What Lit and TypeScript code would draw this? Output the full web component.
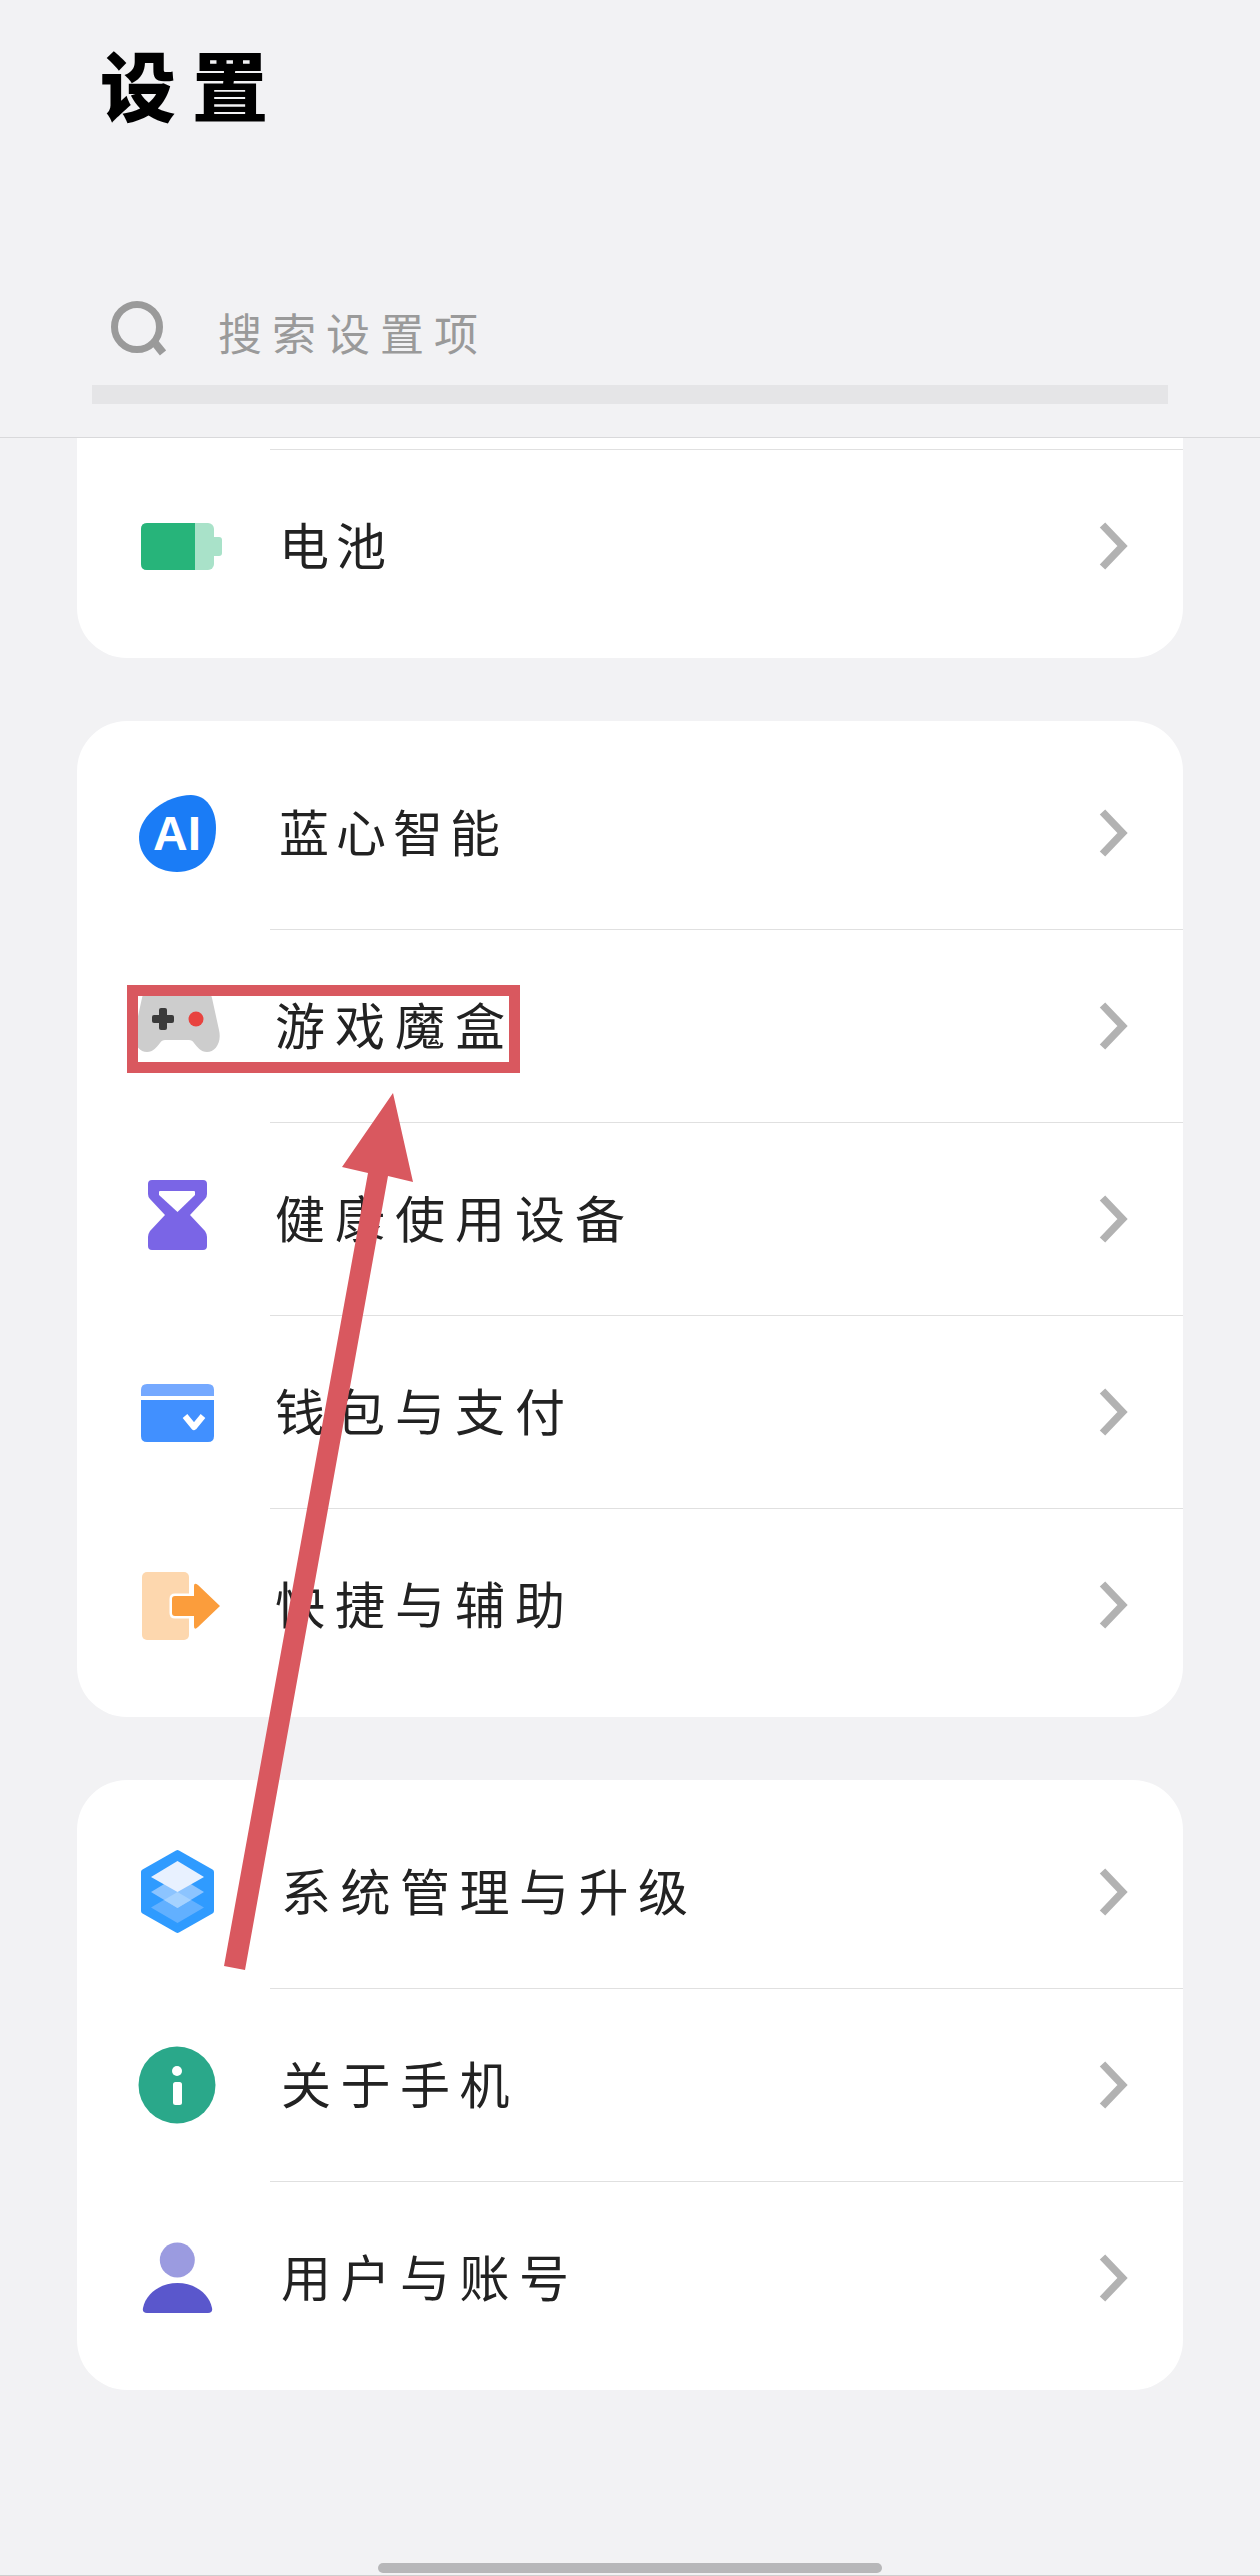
import { LitElement, html, svg, css } from 'lit';
import { customElement } from 'lit/decorators.js';

const icon = (body: unknown) => html`<svg class="icon" viewBox="0 0 90 90">${body}</svg>`;

const icons = {
  battery: svg`
    <rect x="8" y="22" width="73" height="47" rx="6" fill="#a9e2c9"/>
    <path d="M14 22H62V69H14Q8 69 8 63V28Q8 22 14 22Z" fill="#27b47a"/>
    <path d="M81 36H86Q89 36 89 39V52Q89 55 86 55H81Z" fill="#a9e2c9"/>`,
  ai: svg`
    <path d="M58 7C73 7 83 21 83 40C83 68 66 84 44 84C22 84 6 69 6 49C6 27 34 7 58 7Z" fill="#1a7cf6"/>
    <text class="ai" x="44" y="62" text-anchor="middle">AI</text>`,
  game: svg`
    <path d="M16 10H72C76 10 78 13 79 17L86 49C89 62 82 71 74 71C68 71 64 66 61 62C60 60 58 59 56 59H32C30 59 28 60 27 62C24 66 20 71 14 71C6 71 -1 62 2 49L9 17C10 13 12 10 16 10Z" fill="#cdcdcd"/>
    <rect x="19" y="34" width="22" height="8" rx="2" fill="#3a3a3a"/>
    <rect x="26" y="27" width="8" height="22" rx="2" fill="#3a3a3a"/>
    <circle cx="63" cy="38" r="7.5" fill="#e8433f"/>`,
  hourglass: svg`
    <path d="M19 6H70Q74 6 74 10V20Q74 23 72 25L57 41L72 57Q74 60 74 63V72Q74 76 70 76H19Q15 76 15 72V63Q15 60 17 57L32 41L17 25Q15 23 15 20V10Q15 6 19 6Z" fill="#7a65e6"/>
    <path d="M27 17H61Q62 17 62 18V21L44.5 38L26 21V18Q26 17 27 17Z" fill="#fff"/>`,
  wallet: svg`
    <path d="M14 17H75Q81 17 81 23V29H8V23Q8 17 14 17Z" fill="#75a9ff"/>
    <path d="M8 33H81V69Q81 75 75 75H14Q8 75 8 69Z" fill="#4190ff"/>
    <polyline points="52,49 61,60 70,49" fill="none" stroke="#fff" stroke-width="6" stroke-linejoin="round"/>`,
  shortcut: svg`
    <rect x="9" y="12" width="47" height="68" rx="5" fill="#fdd7ae"/>
    <path d="M42 36H61V26Q61 22 65 25L87 46L65 67Q61 71 61 66V56H42Q39 56 39 53V39Q39 36 42 36Z" fill="#fb9d3c" stroke="#fff" stroke-width="5" paint-order="stroke"/>`,
  layers: svg`
    <polygon points="44.5,6 78,25 78,64 44.5,83 11,64 11,25" fill="#2f9bff" stroke="#2f9bff" stroke-width="6" stroke-linejoin="round"/>
    <polygon points="44.5,45 71,60.5 44.5,76 18,60.5" fill="#62b0ff"/>
    <polygon points="44.5,29 71,45 44.5,61 18,45" fill="#8cc4ff"/>
    <polygon points="44.5,45 58,53 44.5,61 31,53" fill="#a5d2ff"/>
    <polygon points="44.5,14 71,30 44.5,45 18,30" fill="#e8f1ff"/>`,
  info: svg`
    <circle cx="44" cy="45" r="38.5" fill="#2aa88a"/>
    <circle cx="44" cy="31" r="5" fill="#fff"/>
    <rect x="40" y="42" width="9" height="23" rx="2.5" fill="#fff"/>`,
  user: svg`
    <circle cx="44.3" cy="27" r="17.5" fill="#9b9be0"/>
    <path d="M14 80Q9 80 10 75C13 60 28 50 44.5 50C61 50 76 60 79 75Q80 80 75 80Z" fill="#5a57cc"/>`,
};

type Row = { icon: keyof typeof icons; label: string; kind?: 'tight' | 'narrow' };

const groups: { rows: Row[]; cut?: boolean }[] = [
  { cut: true, rows: [{ icon: 'battery', label: '电池', kind: 'narrow' }] },
  {
    rows: [
      { icon: 'ai', label: '蓝心智能', kind: 'narrow' },
      { icon: 'game', label: '游戏魔盒', kind: 'tight' },
      { icon: 'hourglass', label: '健康使用设备', kind: 'tight' },
      { icon: 'wallet', label: '钱包与支付', kind: 'tight' },
      { icon: 'shortcut', label: '快捷与辅助', kind: 'tight' },
    ],
  },
  {
    rows: [
      { icon: 'layers', label: '系统管理与升级' },
      { icon: 'info', label: '关于手机' },
      { icon: 'user', label: '用户与账号' },
    ],
  },
];

@customElement('app-root')
export class AppRoot extends LitElement {
  static styles = css`
    :host {
      display: flex;
      flex-direction: column;
      position: relative;
      width: 1260px;
      height: 2576px;
      overflow: hidden;
      background: #f2f2f4;
      font-family: 'Noto Sans CJK SC', 'Noto Sans', sans-serif;
    }

    header {
      box-sizing: border-box;
      height: 438px;
      padding: 41px 92px 0;
      border-bottom: 1px solid #d9d9db;
    }

    h1 {
      margin: 0 0 0 8px;
      font-size: 76px;
      line-height: 84px;
      font-weight: 900;
      letter-spacing: 16px;
      color: #000;
    }

    .search {
      display: flex;
      align-items: center;
      gap: 52px;
      margin-top: 176px;
      padding-left: 18px;
      height: 56px;
      font-size: 44px;
      letter-spacing: 10px;
      color: #9a9a9a;
    }

    .search svg {
      width: 56px;
      height: 56px;
      flex: none;
    }

    .search span {
      padding-top: 5px;
    }

    .bar {
      height: 19px;
      margin-top: 28px;
      background: #e5e5e7;
    }

    main {
      flex: 1;
      display: flex;
      flex-direction: column;
      gap: 63px;
      padding: 0 77px;
    }

    .card {
      padding: 16px 0;
      background: #fff;
      border-radius: 50px;
    }

    .card.cut {
      padding-top: 11px;
      border-radius: 0 0 50px 50px;
    }

    .row {
      display: flex;
      align-items: stretch;
      padding-left: 56px;
    }

    .icon {
      flex: none;
      width: 90px;
      height: 90px;
      align-self: center;
      overflow: visible;
    }

    .ai {
      font-family: 'Liberation Sans', Arial, sans-serif;
      font-size: 48px;
      font-weight: 700;
      fill: #fff;
    }

    .body {
      flex: 1;
      display: flex;
      align-items: center;
      justify-content: space-between;
      height: 192px;
      margin-left: 47px;
      padding: 0 51px 0 11px;
      border-top: 1px solid #e0e0e0;
    }

    .row.first .body {
      border-top: none;
    }

    .card.cut .row.first .body {
      border-top: 1px solid #e0e0e0;
    }

    .label {
      padding-bottom: 6px;
      font-size: 50px;
      letter-spacing: 9.5px;
      color: #222;
    }

    .tight .label {
      margin-left: -6px;
      letter-spacing: 10px;
    }

    .narrow .label {
      margin-left: -2px;
      letter-spacing: 7px;
    }

    .chevron {
      width: 36px;
      height: 60px;
    }

    .home {
      display: flex;
      justify-content: center;
      padding-bottom: 2px;
      border-bottom: 1px solid #cfcfcf;
    }

    .pill {
      width: 504px;
      height: 10px;
      border-radius: 5px;
      background: #b7b7b9;
    }

    /* red marks drawn over the screenshot */
    .box {
      position: absolute;
      left: 127px;
      top: 985px;
      box-sizing: border-box;
      width: 393px;
      height: 88px;
      border: 11px solid #d9585f;
    }

    .arrow {
      position: absolute;
      left: 0;
      top: 0;
      width: 1260px;
      height: 2576px;
      pointer-events: none;
    }
  `;

  private renderRow(row: Row, index: number) {
    return html`
      <div class="row ${index === 0 ? 'first' : ''} ${row.kind ?? ''}">
        ${icon(icons[row.icon])}
        <div class="body">
          <span class="label">${row.label}</span>
          <svg class="chevron" viewBox="0 0 36 60">
            <polyline points="6.5,9 26.5,30 6.5,51" fill="none" stroke="#b2b2b2" stroke-width="7.5"/>
          </svg>
        </div>
      </div>
    `;
  }

  render() {
    return html`
      <header>
        <h1>设置</h1>
        <div class="search">
          <svg viewBox="0 0 56 56">
            <circle cx="27" cy="26" r="22.5" fill="none" stroke="#9a9a9a" stroke-width="7"/>
            <line x1="45" y1="42" x2="53" y2="52" stroke="#9a9a9a" stroke-width="8"/>
          </svg>
          <span>搜索设置项</span>
        </div>
        <div class="bar"></div>
      </header>
      <main>
        ${groups.map(g => html`
          <section class="card ${g.cut ? 'cut' : ''}">
            ${g.rows.map((r, i) => this.renderRow(r, i))}
          </section>
        `)}
      </main>
      <div class="home"><div class="pill"></div></div>
      <div class="box"></div>
      <svg class="arrow" viewBox="0 0 1260 2576">
        <polygon points="224,1966 368,1173 342,1167 393,1093 413,1182 388,1176 245,1970" fill="#d9585f"/>
      </svg>
    `;
  }
}
